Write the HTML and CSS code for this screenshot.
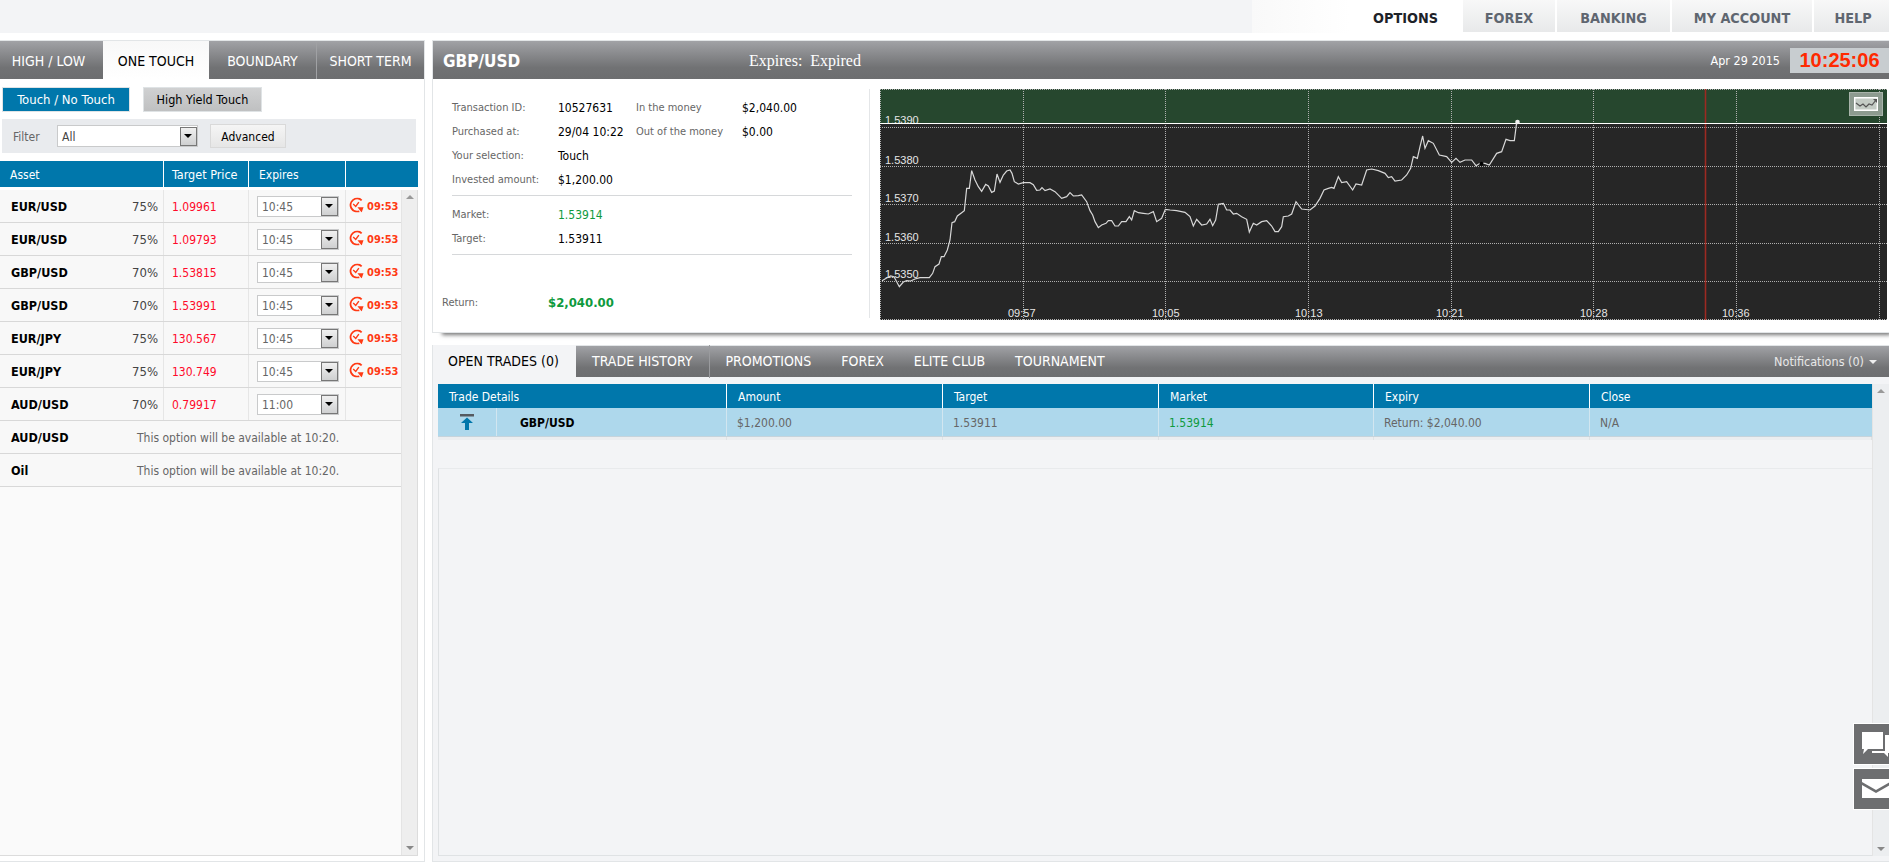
FILE: index.html
```html
<!DOCTYPE html>
<html lang="en">
<head>
  <meta charset="UTF-8" />
  <title>Options Trading</title>
  <link rel="stylesheet" href="styles.css">
</head>
<body>
  <nav class="top-nav">
    <a class="top-tab active">OPTIONS</a>
    <a class="top-tab forex">FOREX</a>
    <a class="top-tab banking">BANKING</a>
    <a class="top-tab account">MY ACCOUNT</a>
    <a class="top-tab help">HELP</a>
  </nav>

  <div class="main">
    <!-- Option list -->
    <section class="left-panel">
      <div class="left-tabs">
        <a class="left-tab t1">HIGH / LOW</a>
        <a class="left-tab t2 active">ONE TOUCH</a>
        <a class="left-tab t3">BOUNDARY</a>
        <a class="left-tab t4">SHORT TERM</a>
      </div>

      <div class="sub-tabs">
        <a class="sub-tab active">Touch / No Touch</a>
        <a class="sub-tab yield">High Yield Touch</a>
      </div>

      <div class="filter-bar">
        <span class="filter-label">Filter</span>
        <div class="select filter-select"><span>All</span><i class="select-arrow"></i></div>
        <a class="advanced-btn">Advanced</a>
      </div>

      <div class="asset-head">
        <div>Asset</div>
        <div>Target Price</div>
        <div>Expires</div>
        <div></div>
      </div>

      <div class="asset-body">
        <div class="asset-list">
          <div class="asset-row">
            <div class="asset-cell"><b>EUR/USD</b><span>75%</span></div>
            <div class="price-cell">1.09961</div>
            <div class="expiry-cell"><div class="select"><span>10:45</span><i class="select-arrow"></i></div></div>
            <div class="timer-cell"><svg class="clock" viewBox="0 0 16 16"><use href="#clock" /></svg>09:53</div>
          </div>
          <div class="asset-row">
            <div class="asset-cell"><b>EUR/USD</b><span>75%</span></div>
            <div class="price-cell">1.09793</div>
            <div class="expiry-cell"><div class="select"><span>10:45</span><i class="select-arrow"></i></div></div>
            <div class="timer-cell"><svg class="clock" viewBox="0 0 16 16"><use href="#clock" /></svg>09:53</div>
          </div>
          <div class="asset-row">
            <div class="asset-cell"><b>GBP/USD</b><span>70%</span></div>
            <div class="price-cell">1.53815</div>
            <div class="expiry-cell"><div class="select"><span>10:45</span><i class="select-arrow"></i></div></div>
            <div class="timer-cell"><svg class="clock" viewBox="0 0 16 16"><use href="#clock" /></svg>09:53</div>
          </div>
          <div class="asset-row">
            <div class="asset-cell"><b>GBP/USD</b><span>70%</span></div>
            <div class="price-cell">1.53991</div>
            <div class="expiry-cell"><div class="select"><span>10:45</span><i class="select-arrow"></i></div></div>
            <div class="timer-cell"><svg class="clock" viewBox="0 0 16 16"><use href="#clock" /></svg>09:53</div>
          </div>
          <div class="asset-row">
            <div class="asset-cell"><b>EUR/JPY</b><span>75%</span></div>
            <div class="price-cell">130.567</div>
            <div class="expiry-cell"><div class="select"><span>10:45</span><i class="select-arrow"></i></div></div>
            <div class="timer-cell"><svg class="clock" viewBox="0 0 16 16"><use href="#clock" /></svg>09:53</div>
          </div>
          <div class="asset-row">
            <div class="asset-cell"><b>EUR/JPY</b><span>75%</span></div>
            <div class="price-cell">130.749</div>
            <div class="expiry-cell"><div class="select"><span>10:45</span><i class="select-arrow"></i></div></div>
            <div class="timer-cell"><svg class="clock" viewBox="0 0 16 16"><use href="#clock" /></svg>09:53</div>
          </div>
          <div class="asset-row">
            <div class="asset-cell"><b>AUD/USD</b><span>70%</span></div>
            <div class="price-cell">0.79917</div>
            <div class="expiry-cell"><div class="select"><span>11:00</span><i class="select-arrow"></i></div></div>
            <div class="timer-cell"></div>
          </div>
          <div class="asset-row pending">
            <b>AUD/USD</b>
            <span>This option will be available at 10:20.</span>
          </div>
          <div class="asset-row pending">
            <b>Oil</b>
            <span>This option will be available at 10:20.</span>
          </div>
        </div>
        <div class="scrollbar"><i class="arrow-up"></i><i class="arrow-down"></i></div>
      </div>
    </section>

    <div class="right-col">
      <!-- Trade detail + chart -->
      <section class="trade-panel">
        <header class="trade-head">
          <h2>GBP/USD</h2>
          <div class="trade-expires">Expires:&nbsp; Expired</div>
          <div class="trade-date">Apr 29 2015</div>
          <div class="trade-clock">10:25:06</div>
        </header>
        <div class="trade-body">
          <div class="trade-info">
            <div class="info-grid">
              <span class="lbl">Transaction ID:</span><span>10527631</span><span class="lbl">In the money</span><span>$2,040.00</span>
              <span class="lbl">Purchased at:</span><span>29/04 10:22</span><span class="lbl">Out of the money</span><span>$0.00</span>
              <span class="lbl">Your selection:</span><span>Touch</span><span></span><span></span>
              <span class="lbl">Invested amount:</span><span>$1,200.00</span><span></span><span></span>
            </div>
            <hr class="info-rule first" />
            <div class="info-grid">
              <span class="lbl">Market:</span><span class="green">1.53914</span><span></span><span></span>
              <span class="lbl">Target:</span><span>1.53911</span><span></span><span></span>
            </div>
            <hr class="info-rule" />
            <div class="return-row">
              <span class="lbl">Return:</span><b>$2,040.00</b>
            </div>
          </div>

          <div class="chart">
            <svg class="chart-svg" viewBox="880 89 1007 231">
              <rect x="880" y="89" width="1007" height="231" fill="#262626" />
              <rect x="880" y="89" width="1007" height="34" fill="#26472e" />
              <g class="chart-grid">
                <path d="M880 127.500H1887M880 166.500H1887M880 204.500H1887M880 243.500H1887M880 281.500H1887M880 319.500H1887M880.500 89V320M880 89.500H1887" />
                <path d="M1023.500 89V320M1165.500 89V320M1308.500 89V320M1451.500 89V320M1593.500 89V320M1736.500 89V320M1879.500 89V320" />
              </g>
              <path d="M1705.500 89V320" stroke="#9c2a22" stroke-width="1.600" fill="none" />
              <g class="chart-labels">
                <text x="885" y="124">1.5390</text>
                <text x="885" y="163.500">1.5380</text>
                <text x="885" y="202">1.5370</text>
                <text x="885" y="240.500">1.5360</text>
                <text x="885" y="278">1.5350</text>
                <text x="1008" y="317">09:57</text>
                <text x="1152" y="317">10:05</text>
                <text x="1295" y="317">10:13</text>
                <text x="1436" y="317">10:21</text>
                <text x="1580" y="317">10:28</text>
                <text x="1722" y="317">10:36</text>
              </g>
              <path d="M880 123.500H1887" stroke="#fff" fill="none" />
              <g transform="translate(870 80) scale(.33333)">
                <polyline class="chart-line" points="36,602 50,594 62,588 72,590 80,605 88,620 100,606 110,602 122,603 135,597 150,593 165,593 178,593 188,580 195,560 207,552 214,530 222,530 232,510 240,480 246,428 254,425 262,408 275,398 283,392 290,325 298,325 305,272 315,300 325,320 335,334 347,313 355,318 365,337 373,333 381,282 390,307 400,285 410,273 420,270 426,280 433,305 445,312 460,308 480,308 490,314 500,331 510,330 516,323 525,332 540,327 555,335 575,355 590,350 600,338 610,348 625,347 635,345 650,365 660,392 668,405 675,425 685,443 695,435 708,430 715,422 725,422 735,438 745,438 755,425 768,425 778,410 785,420 793,392 805,398 820,400 835,402 850,395 860,425 875,415 886,388 900,390 920,392 945,397 960,410 970,438 980,418 995,435 1010,432 1020,418 1028,437 1037,420 1045,373 1060,370 1070,390 1080,390 1090,402 1100,400 1115,410 1130,418 1138,456 1150,430 1160,435 1175,425 1190,422 1205,438 1215,455 1225,455 1235,440 1240,410 1255,408 1265,402 1278,365 1295,387 1320,390 1335,378 1350,355 1362,330 1375,325 1385,322 1392,325 1405,290 1415,308 1430,305 1448,330 1458,312 1475,315 1490,270 1505,267 1525,272 1545,280 1555,293 1565,290 1575,303 1595,300 1610,285 1622,265 1630,230 1642,235 1650,200 1658,168 1665,205 1675,182 1690,190 1708,225 1730,230 1745,247 1758,235 1770,247 1785,240 1805,240 1818,257 1830,250 1845,250 1858,255 1880,220 1895,215 1908,178 1920,182 1933,182 1940,127 1943,126" />
              </g>
              <circle cx="1481.500" cy="163.800" r="2" fill="#000" />
              <circle cx="1517.500" cy="122" r="2.300" fill="#f2f2f2" />
            </svg>
            <a class="chart-toggle">
              <svg viewBox="0 0 24 14"><path d="M.7 .7V13.300H23.300V.7H.7Z" fill="#c4ccc5" stroke="#fff" stroke-width="1.400" /><path d="M2 6 L6 9 L9 7 L12 10 L15 7 L18 8 L22 3" fill="none" stroke="#555" stroke-width="1.200" /><path d="M19 2H23V6Z" fill="#555" /></svg>
            </a>
          </div>
        </div>
      </section>

      <!-- Open trades -->
      <section class="bottom-panel">
        <div class="bottom-tabs">
          <a class="bottom-tab active">OPEN TRADES (0)</a>
          <a class="bottom-tab history">TRADE HISTORY</a>
          <a class="bottom-tab">PROMOTIONS</a>
          <a class="bottom-tab">FOREX</a>
          <a class="bottom-tab">ELITE CLUB</a>
          <a class="bottom-tab">TOURNAMENT</a>
          <div class="notifications">Notifications (0) <i></i></div>
        </div>
        <div class="trades-body">
          <div class="trades-main">
            <div class="trades-grid trades-head">
              <div>Trade Details</div><div>Amount</div><div>Target</div><div>Market</div><div>Expiry</div><div>Close</div>
            </div>
            <div class="trades-grid trades-row">
              <div class="trade-name">
                <span class="trade-icon">
                  <svg viewBox="0 0 14 16"><rect x="0" y="0" width="14" height="2.500" fill="#555a60" /><path d="M7 3.500 L13 9 H9 V16 H5 V9 H1 Z" fill="#0077ab" /></svg>
                </span>
                <b>GBP/USD</b>
              </div>
              <div>$1,200.00</div><div>1.53911</div><div class="green">1.53914</div><div>Return: $2,040.00</div><div>N/A</div>
            </div>
            <div class="trades-grid trades-ghost"><div></div><div></div><div></div><div></div><div></div><div></div></div>
            <div class="trades-empty"></div>
          </div>
          <div class="scrollbar wide"><i class="arrow-up"></i><i class="arrow-down"></i></div>
        </div>
      </section>
    </div>
  </div>

  <div class="side-buttons">
    <a class="side-btn">
      <svg viewBox="0 0 36 28"><path d="M8 1H29V18H14L9 23L10 18H8Z" fill="#fff" /><path d="M31 4H36V22H34V26L30 22H18V20H31Z" fill="#fff" /></svg>
    </a>
    <a class="side-btn">
      <svg viewBox="0 0 36 28"><path d="M8 3H36V6L22 14L8 6Z M8 9L22 17L36 9V22H8Z" fill="#fff" /></svg>
    </a>
  </div>

  <svg class="svg-defs" width="0" height="0">
    <symbol id="clock" viewBox="0 0 16 16">
      <path d="M13.500 3 A7 7 0 1 0 11 14.700" fill="none" stroke="#ff3a14" stroke-width="2" />
      <path d="M4.500 7 L7.200 9.500 L10.500 5" fill="none" stroke="#ff3a14" stroke-width="1.500" />
      <path d="M9 10.500 H15.500 L13.500 16 Z" fill="#ff3a14" />
    </symbol>
  </svg>
</body>
</html>
```
FILE: styles.css
```css
:root {
  --blue: #0077ab;
  --panel-line: #e2e5e7;
  --soft-bg: #f3f4f6;
  --muted: #666;
  --green: #0e9a3d;
  --red: #ff0a2a;
  --dark-tab: linear-gradient(#a1a2a6 0%, #8c8d90 30%, #717274 70%, #6d6e70 100%);
}

html, body {
  margin: 0;
  height: 100%;
  overflow: hidden;
  background: #fff;
  font-family: "DejaVu Sans", sans-serif;
  font-stretch: condensed;
  font-size: 12px;
  color: #000;
}

/* Top nav */
.top-nav {
  height: 33px;
  display: flex;
  justify-content: flex-end;
  background: linear-gradient(90deg, var(--soft-bg) 1252px, #f9f9f9 1252px, #fff 1350px);
}
.top-tab {
  height: 32px;
  line-height: 36px;
  text-align: center;
  font-size: 14.300px;
  font-weight: bold;
  color: #5f6670;
  margin-left: 2px;
  background: linear-gradient(#f8f8f8, #e8e9ea);
}
.top-tab.active { width: 111px; background: #fff; color: #1d2228; }
.top-tab.forex { width: 92px; }
.top-tab.banking { width: 113px; }
.top-tab.account { width: 140px; }
.top-tab.help { width: 72px; padding-left: 3px; }

.main {
  display: flex;
  height: 829px;
  padding-top: 7px;
  box-sizing: border-box;
}

/* Left panel */
.left-panel {
  width: 425px;
  height: 822px;
  box-sizing: border-box;
  border: 1px solid var(--panel-line);
  border-left: 0;
  display: flex;
  flex-direction: column;
  padding-bottom: 5px;
}
.left-tabs { display: flex; height: 38px; }
.left-tab {
  line-height: 40px;
  text-align: center;
  font-size: 14px;
  color: #fff;
  background: var(--dark-tab);
  box-sizing: border-box;
}
.left-tab.t1 { width: 103px; padding-right: 6px; }
.left-tab.t2 { width: 106px; }
.left-tab.t3 { width: 108px; border-right: 1px solid #a0a1a4; }
.left-tab.t4 { width: 107px; }
.left-tab.active { background: linear-gradient(#f8f8f8, #fff); color: #000; }

.sub-tabs { display: flex; gap: 13px; padding: 8px 0 0 2px; }
.sub-tab {
  height: 25px;
  line-height: 24px;
  text-align: center;
  box-sizing: border-box;
  border: 1px solid #dfe3e5;
  font-size: 12.500px;
}
.sub-tab.active { width: 128px; background: var(--blue); color: #fff; font-size: 13px; }
.sub-tab.yield { width: 119px; background: linear-gradient(#d0d1d2, #bfc0c1); color: #000; }

.filter-bar {
  display: flex;
  align-items: center;
  width: 414px;
  height: 34px;
  margin: 7px 0 0 2px;
  background: #e9ebee;
}
.filter-label { width: 55px; padding: 1px 0 0 11px; box-sizing: border-box; color: var(--muted); }
.select {
  display: flex;
  justify-content: space-between;
  align-items: center;
  width: 82px;
  height: 21px;
  box-sizing: border-box;
  background: #fff;
  border: 1px solid #c9cacb;
  color: #666;
  padding-left: 4px;
}
.select span { padding-top: 1px; }
.select-arrow {
  position: relative;
  display: block;
  width: 17px;
  height: 19px;
  box-sizing: border-box;
  border: 1px solid #777;
  background: linear-gradient(#f0f0f0, #cfd0d1);
}
.select-arrow::after {
  content: '';
  position: absolute;
  top: 6px;
  left: 3px;
  border: 4px solid transparent;
  border-top: 4px solid #000;
  border-bottom: 0;
}
.filter-select { width: 141px; height: 22px; color: #444; }
.advanced-btn {
  width: 76px;
  height: 24px;
  line-height: 24px;
  margin-left: 12px;
  text-align: center;
  box-sizing: border-box;
  border: 1px solid #d9d9d9;
  background: linear-gradient(#f5f5f5, #e6e6e6);
}

.asset-head {
  display: grid;
  grid-template-columns: 164px 85px 97px 72px;
  width: 418px;
  height: 26px;
  margin-top: 8px;
  background: var(--blue);
  color: #fff;
}
.asset-head div {
  line-height: 28px;
  padding-left: 10px;
  border-right: 1px solid #fff;
  box-sizing: border-box;
}
.asset-head div:nth-child(2) { padding-left: 8px; font-size: 12.500px; }
.asset-head div:last-child { border: 0; }

.asset-body {
  flex: 1;
  display: flex;
  width: 418px;
  margin-top: 3px;
  background: #fafafa;
  border-bottom: 1px solid #dcdcdc;
  border-right: 1px solid #dcdcdc;
  box-sizing: border-box;
}
.asset-list { flex: 1; }
.asset-row {
  display: grid;
  grid-template-columns: 164px 85px 97px 1fr;
  height: 33px;
  box-sizing: border-box;
  border-bottom: 1px solid #d8d8d8;
  background: #f8f8f8;
}
.asset-row > div {
  display: flex;
  align-items: center;
  box-sizing: border-box;
  border-right: 1px solid #e6e6e6;
}
.asset-row > div:last-child { border-right: 0; }
.asset-cell { justify-content: space-between; padding: 1px 5px 0 11px; }
.asset-cell b { font-size: 12.500px; }
.asset-cell span { font-size: 13px; color: #444; }
.price-cell { padding: 1px 0 0 8px; color: var(--red); font-size: 12px; }
.expiry-cell { padding-left: 8px; }
.timer-cell {
  padding: 1px 0 0 3px;
  gap: 3px;
  color: #ff3a14;
  font-size: 11px;
  font-weight: bold;
}
.clock { width: 15px; height: 16px; margin-top: -3px; }
.asset-row.pending {
  grid-template-columns: 137px 1fr;
  align-items: center;
  padding-top: 1px;
}
.asset-row.pending b { padding-left: 11px; font-size: 12.500px; }
.asset-row.pending span { color: var(--muted); }

.scrollbar {
  position: relative;
  width: 16px;
  background: #eeeeee;
  border-left: 1px solid #e4e4e4;
  box-sizing: border-box;
}
.scrollbar.wide { width: 17px; background: #eceef0; }
.arrow-up, .arrow-down {
  position: absolute;
  left: 4px;
  border: 4px solid transparent;
}
.arrow-up { top: 5px; border-top: 0; border-bottom: 4px solid #999; }
.arrow-down { bottom: 5px; border-bottom: 0; border-top: 4px solid #888; }

/* Right column */
.right-col {
  margin-left: 7px;
  width: 1457px;
  display: flex;
  flex-direction: column;
}
.trade-panel {
  height: 293px;
  box-sizing: border-box;
  border: 1px solid var(--panel-line);
  border-right: 0;
  background: #fff;
  box-shadow: 6px 6px 4px -4px #777;
}
.trade-head {
  display: flex;
  align-items: center;
  height: 38px;
  background: var(--dark-tab);
  color: #fff;
  position: relative;
}
.trade-head h2 { margin: 1px 0 0 10px; width: 306px; font-size: 17px; }
.trade-expires { font-family: "Liberation Serif", serif; font-stretch: normal; font-size: 16px; flex: 1; padding-top: 2px; }
.trade-date { font-size: 12.500px; margin-right: 10px; padding-top: 1px; }
.trade-clock {
  width: 99px;
  height: 25px;
  line-height: 25px;
  text-align: center;
  background: #c8cdd0;
  color: #ff2a00;
  font-family: "Liberation Sans", sans-serif;
  font-stretch: normal;
  font-size: 20px;
  font-weight: bold;
}

.trade-body { display: flex; padding-top: 10px; }
.trade-info {
  width: 437px;
  height: 229px;
  padding: 6px 0 0 19px;
  box-sizing: border-box;
  border-right: 1px solid #e4e6e8;
}
.info-grid {
  display: grid;
  grid-template-columns: 106px 78px 106px 1fr;
  grid-auto-rows: 24px;
  align-items: center;
}
.info-grid span { padding-top: 1px; }
.info-grid .lbl { padding-top: 0; }
.lbl { font-size: 11px; color: var(--muted); }
.green { color: var(--green); }
.info-rule {
  width: 400px;
  margin: 4px 0 6px;
  border: 0;
  border-top: 1px solid #d6d8da;
}
.return-row {
  display: grid;
  grid-template-columns: 106px 1fr;
  align-items: center;
  height: 24px;
  margin: 35px 0 0 -10px;
}
.return-row b { color: var(--green); font-size: 13px; }

.chart { position: relative; margin-left: 10px; width: 1007px; height: 231px; }
.chart-svg { display: block; width: 1007px; height: 231px; }
.chart-grid path { fill: none; stroke: #b0b0b0; stroke-dasharray: 1 1; }
.chart-labels text {
  fill: #e6e6e6;
  font-family: "Liberation Sans", sans-serif;
  font-stretch: normal;
  font-size: 11px;
}
.chart-line { fill: none; stroke: #d8d8d8; stroke-width: 3.600; }
.chart-toggle {
  position: absolute;
  top: 3px;
  right: 4px;
  display: block;
  width: 34px;
  height: 24px;
  padding: 4px;
  box-sizing: border-box;
  background: #8d9b90;
  border: 1px solid #a9b4ab;
}
.chart-toggle svg { display: block; width: 24px; height: 14px; }

/* Bottom panel */
.bottom-panel {
  flex: 1;
  margin-top: 12px;
  height: 517px;
  box-sizing: border-box;
  border: 1px solid var(--panel-line);
  border-right: 0;
  background: var(--soft-bg);
  display: flex;
  flex-direction: column;
  padding-bottom: 5px;
}
.bottom-tabs {
  display: flex;
  align-items: center;
  height: 31px;
  background: var(--dark-tab);
  color: #fff;
}
.bottom-tab {
  line-height: 33px;
  font-size: 14px;
  padding: 0 15px;
  box-sizing: border-box;
}
.bottom-tab.active { width: 143px; padding-left: 15px; background: var(--soft-bg); color: #000; }
.bottom-tab.history { border-right: 1px solid #9a9b9e; padding: 0 17px 0 16px; }
.notifications {
  margin-left: auto;
  padding-right: 12px;
  font-size: 12.500px;
  display: flex;
  align-items: center;
  gap: 5px;
  color: #e8e8e8;
}
.notifications i {
  border: 4px solid transparent;
  border-top: 4px solid #eee;
  border-bottom: 0;
}

.trades-body { flex: 1; display: flex; margin-top: 7px; padding-left: 5px; }
.trades-main { flex: 1; display: flex; flex-direction: column; }
.trades-grid {
  display: grid;
  grid-template-columns: 289px 216px 216px 215px 216px 1fr;
}
.trades-grid > div { padding: 1px 0 0 10px; box-sizing: border-box; display: flex; align-items: center; }
.trades-head { height: 24px; background: var(--blue); color: #fff; }
.trades-head > div { border-right: 1px solid #fff; padding-left: 11px; }
.trades-head > div:last-child { border: 0; }
.trades-row { height: 29px; background: #aed8ec; color: var(--muted); border-bottom: 1px solid #c6d4dc; box-sizing: border-box; }
.trades-row > div { border-right: 1px solid #d2e6f0; }
.trades-row > div:last-child { border: 0; }
.trades-row > .green { color: var(--green); }
.trades-row .trade-name { padding: 0; color: #000; }
.trade-icon {
  width: 59px;
  height: 100%;
  display: flex;
  align-items: center;
  justify-content: center;
  border-right: 1px solid #d2e6f0;
  box-sizing: border-box;
}
.trade-icon svg { width: 14px; height: 16px; }
.trade-name b { margin: 1px 0 0 23px; }
.trades-ghost { height: 3px; background: #eceef0; }
.trades-ghost > div { border-right: 1px solid #dfe2e4; padding: 0; }
.trades-empty {
  flex: 1;
  margin-top: 28px;
  border-top: 1px solid #e8eaec;
  border-left: 1px solid #dfe2e4;
  border-bottom: 1px solid #dfe2e4;
}

.side-buttons {
  position: absolute;
  right: 0;
  top: 723px;
  display: flex;
  flex-direction: column;
  gap: 3px;
}
.side-btn {
  display: block;
  width: 36px;
  height: 42px;
  padding-top: 7px;
  box-sizing: border-box;
  background: #6d6e70;
  border: 1px solid #fff;
  border-right: 0;
}
.side-btn svg { display: block; width: 36px; height: 28px; }
.svg-defs { position: absolute; }
```
